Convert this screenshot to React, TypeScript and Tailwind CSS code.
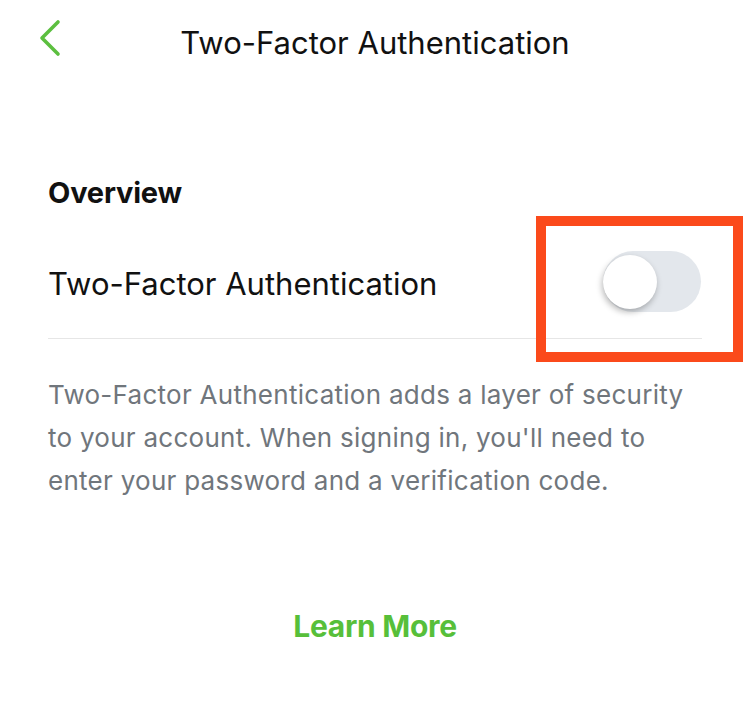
import React from "react";

export default function App() {
  return (
    <div className="relative w-[750px] h-[701px] bg-white font-['Inter','Liberation_Sans',sans-serif] text-[#111111] overflow-hidden">
      {/* Nav bar */}
      <div className="grid grid-cols-[1fr_auto_1fr] items-center h-[84px]">
        <div className="pl-[38px] pb-[9px] flex items-center">
          <svg width="24" height="38" viewBox="0 0 24 38" fill="none">
            <path d="M20 3 L4 19 L20 35" stroke="#5cbf3f" strokeWidth="3.6" strokeLinecap="round" strokeLinejoin="round" />
          </svg>
        </div>
        <h1 className="text-[31px] font-normal leading-none">Two-Factor Authentication</h1>
        <div />
      </div>

      <div className="px-[48px] pt-[94px]">
        <h2 className="text-[29px] font-bold leading-none tracking-[-0.2px]">Overview</h2>

        <div className="flex items-center justify-between h-[121px] pt-[10px] border-b border-[#e6e6e6] mt-[11px]">
          <span className="text-[31px] leading-none">Two-Factor Authentication</span>
          <div className="relative w-[98px] h-[61px] rounded-full bg-[#e3e7ec] mr-[1px] -mt-[3px]">
            <div className="absolute left-0 top-[4px] w-[54px] h-[54px] rounded-full bg-white shadow-[-1px_3px_6px_rgba(0,0,0,0.28)]" />
          </div>
        </div>

        <p className="mt-[34px] text-[26px] leading-[43px] text-[#70767c] tracking-[0.27px]">
          Two-Factor Authentication adds a layer of security to your account. When signing in, you'll need to enter your password and a verification code.
        </p>

        <div className="mt-[109px] flex justify-center">
          <button className="text-[30px] font-bold text-[#57bf3a] leading-none tracking-[-0.3px]">Learn More</button>
        </div>
      </div>

      {/* Annotation box */}
      <div className="absolute left-[536px] top-[216px] w-[207px] h-[146px] border-[10px] border-[#fb4a1b] pointer-events-none" />
    </div>
  );
}
